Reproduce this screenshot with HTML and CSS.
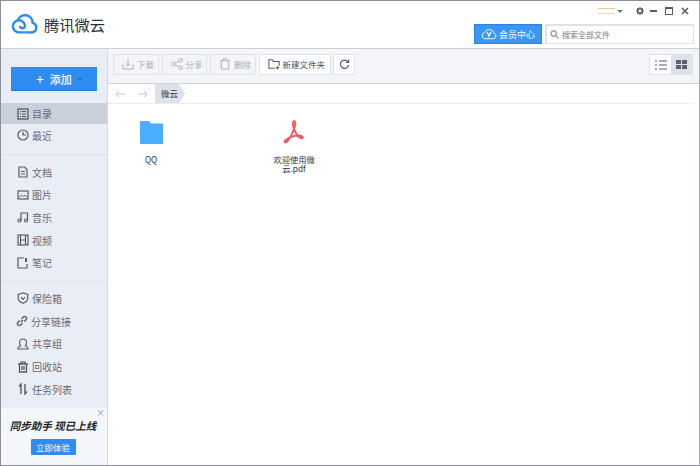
FILE: index.html
```html
<!DOCTYPE html>
<html lang="zh-CN">
    <head>
        <meta charset="UTF-8">
        <title>腾讯微云</title>
        <link rel="stylesheet" href="styles.css">
    </head>
    <body>
        <div id="app">
            <div id="header">
                <div class="logo">
                    <svg width="26" height="21" viewBox="0 0 32 26" fill="none" stroke="#2f8df2" stroke-width="3" stroke-linecap="round">
                        <path d="M24 24H8.500A7.500 7.500 0 1 1 16 16.500 3.200 3.200 0 0 1 10 17"/>
                        <path d="M7 9.200A9.500 9.500 0 0 1 25.500 12.200 6 6 0 0 1 24 24"/>
                    </svg>
                    <span>腾讯微云</span>
                </div>
                <div class="head-right">
                    <div class="win-bar">
                        <div class="user-line"></div>
                        <div class="caret"></div>
                        <svg class="gear" width="8" height="8" viewBox="0 0 10 10"><circle cx="5" cy="5" r="2.800" fill="none" stroke="#555b66" stroke-width="2"/><path d="M5 0v2M5 8v2M0 5h2M8 5h2M1.500 1.500l1.300 1.300M7.200 7.200l1.300 1.300M1.500 8.500l1.300-1.300M7.200 2.800l1.300-1.300" stroke="#555b66" stroke-width="1.500"/></svg>
                        <div class="win-min"></div>
                        <div class="win-max"></div>
                        <svg width="8" height="8" viewBox="0 0 8 8"><path d="M1 1l6 6M7 1l-6 6" stroke="#555b66" stroke-width="1.500"/></svg>
                    </div>
                    <div class="head-tools">
                        <div class="vip">
                            <svg width="16" height="12" viewBox="0 0 17 12" fill="none" stroke="#fff" stroke-width="1"><path d="M4 11h9a3 3 0 0 0 .6-5.900A5 5 0 0 0 4 4.500 3.300 3.300 0 0 0 4 11z"/><path d="M6.500 4l2 4.500L10.500 4" stroke-width="1.300"/></svg>
                            <span>会员中心</span>
                        </div>
                        <div class="search">
                            <svg width="9" height="9" viewBox="0 0 10 10" fill="none" stroke="#8d9299" stroke-width="1.300"><circle cx="4" cy="4" r="3"/><path d="M6.300 6.300L9.500 9.500"/></svg>
                            <span>搜索全部文件</span>
                        </div>
                    </div>
                </div>
            </div>
            <div id="main">
                <div id="side">
                    <div class="add-wrap">
                        <div class="add-btn"><b>+</b><span>添加</span><i></i></div>
                    </div>
                    <div class="nav-group first">
                        <div class="nav-item on">
                            <svg viewBox="0 0 12 12" fill="none" stroke="#555b66"><rect x="1" y="1" width="10" height="10" stroke-width="1.300"/><path d="M3 3.500h1M3 6h1M3 8.500h1M5 3.500h4M5 6h4M5 8.500h4"/></svg>
                            <span>目录</span>
                        </div>
                        <div class="nav-item">
                            <svg viewBox="0 0 12 12" fill="none" stroke="#555b66"><circle cx="6" cy="6" r="5" stroke-width="1.200"/><path d="M6 2.800V6h3" stroke-width="1.200"/></svg>
                            <span>最近</span>
                        </div>
                    </div>
                    <div class="nav-group">
                        <div class="nav-item">
                            <svg viewBox="0 0 12 12" fill="none" stroke="#555b66" stroke-width="1.200"><path d="M2 1h5.500L10 3.500V11H2z"/><path d="M4 5.500h4M4 8h4"/></svg>
                            <span>文档</span>
                        </div>
                        <div class="nav-item">
                            <svg viewBox="0 0 12 12" fill="none" stroke="#555b66" stroke-width="1.200"><rect x="1" y="2" width="10" height="8"/><path d="M2 8.500l2.500-2.500 2 1.500L8 6l2 2" stroke-width=".9"/></svg>
                            <span>图片</span>
                        </div>
                        <div class="nav-item">
                            <svg viewBox="0 0 12 12" fill="none" stroke="#555b66" stroke-width="1.200"><path d="M4 9.500V2h6.500v7"/><circle cx="2.500" cy="9.500" r="1.500"/><circle cx="9" cy="9.500" r="1.500"/></svg>
                            <span>音乐</span>
                        </div>
                        <div class="nav-item">
                            <svg viewBox="0 0 12 12" fill="none" stroke="#555b66" stroke-width="1.200"><rect x="1" y="1" width="10" height="10"/><path d="M3.500 1v10M8.500 1v10M3.500 6h5"/></svg>
                            <span>视频</span>
                        </div>
                        <div class="nav-item">
                            <svg viewBox="0 0 12 12" fill="none" stroke="#555b66" stroke-width="1.200"><path d="M7 1H1v10h9V7"/><path d="M9 1v4" stroke-width="2"/></svg>
                            <span>笔记</span>
                        </div>
                    </div>
                    <div class="nav-group last">
                        <div class="nav-item">
                            <svg viewBox="0 0 12 12" fill="none" stroke="#555b66" stroke-width="1.200"><path d="M6 .8l4.800 1.700V6c0 2.500-2 4.300-4.800 5.300C3.200 10.300 1.200 8.500 1.200 6V2.500z"/><path d="M4 5l2 2.500L8 5"/></svg>
                            <span>保险箱</span>
                        </div>
                        <div class="nav-item nudge">
                            <svg viewBox="0 0 12 12" fill="none" stroke="#555b66" stroke-width="1.300"><path d="M5 7l2-2M3.800 5.500L2 7.300a1.900 1.900 0 0 0 2.700 2.700l1.800-1.800M5.500 3.800L7.300 2A1.900 1.900 0 0 1 10 4.700L8.200 6.500"/></svg>
                            <span>分享链接</span>
                        </div>
                        <div class="nav-item">
                            <svg viewBox="0 0 12 12" fill="none" stroke="#555b66" stroke-width="1.100"><path d="M.8 11c0-2 1.700-2.500 3-3.200-1-1-1.300-2-1.300-3.300C2.500 2.500 4 1 6 1s3.500 1.500 3.500 3.500c0 1.300-.3 2.300-1.300 3.300 1.300.7 3 1.200 3 3.200z"/></svg>
                            <span>共享组</span>
                        </div>
                        <div class="nav-item">
                            <svg viewBox="0 0 12 12" fill="none" stroke="#555b66" stroke-width="1.300"><path d="M1 3h10M4 3V1.200h4V3M2.500 3v8h7V3M5 5v4M7 5v4"/></svg>
                            <span>回收站</span>
                        </div>
                        <div class="nav-item">
                            <svg viewBox="0 0 12 12" fill="none" stroke="#555b66" stroke-width="1.400"><path d="M4 11V1L2 3.500M8 1v10l2-2.500"/></svg>
                            <span>任务列表</span>
                        </div>
                    </div>
                    <div class="promo">
                        <div class="promo-close">×</div>
                        <div class="promo-title">同步助手 现已上线</div>
                        <div class="promo-btn">立即体验</div>
                    </div>
                </div>
                <div id="content">
                    <div class="toolbar">
                        <div class="tool dim w-small">
                            <svg width="12" height="12" viewBox="0 0 13 13" fill="none" stroke="#a9aeb6"><path d="M1 7v5h11V7M6.500 1v7.500M4 6.500l2.500 2.500L9 6.500"/></svg>
                            <span>下载</span>
                        </div>
                        <div class="tool dim w-small">
                            <svg width="12" height="12" viewBox="0 0 13 13" fill="none" stroke="#a9aeb6"><circle cx="2.500" cy="6.500" r="2"/><circle cx="10.500" cy="2.500" r="2"/><circle cx="10.500" cy="10.500" r="2"/><path d="M4.300 5.600l4.400-2.200M4.300 7.400l4.400 2.200"/></svg>
                            <span>分享</span>
                        </div>
                        <div class="tool dim w-small">
                            <svg width="12" height="12" viewBox="0 0 13 13" fill="none" stroke="#a9aeb6"><path d="M1 3h11M4.500 3V1h4v2M2.500 3v9h8V3"/></svg>
                            <span>删除</span>
                        </div>
                        <div class="tool w-new">
                            <svg width="12" height="12" viewBox="0 0 14 13" fill="none" stroke="#555b66" stroke-width="1.200"><path d="M8 11.500H1V1.500h4l1.500 2H13v5M11 9v4M9 11h4"/></svg>
                            <span>新建文件夹</span>
                        </div>
                        <div class="tool refresh">
                            <svg width="11" height="11" viewBox="0 0 12 12" fill="none" stroke="#555b66" stroke-width="1.300"><path d="M10 3.500A4.500 4.500 0 1 0 10.500 6.500M10.500 .8v3h-3"/></svg>
                        </div>
                        <div class="views">
                            <div class="view">
                                <svg width="12" height="10" viewBox="0 0 12 10" fill="none" stroke="#555b66" stroke-width="1.200"><path d="M0 1h2M4 1h8M0 5h2M4 5h8M0 9h2M4 9h8"/></svg>
                            </div>
                            <div class="view on">
                                <svg width="11" height="9" viewBox="0 0 11 9" fill="#5d636e"><rect width="5" height="4"/><rect x="6" width="5" height="4"/><rect y="5" width="5" height="4"/><rect x="6" y="5" width="5" height="4"/></svg>
                            </div>
                        </div>
                    </div>
                    <div class="crumbs">
                        <svg width="10" height="8" viewBox="0 0 10 8" fill="none" stroke="#c3c7ce"><path d="M10 4H1M4 1L1 4l3 3"/></svg>
                        <svg class="next" width="10" height="8" viewBox="0 0 10 8" fill="none" stroke="#c3c7ce"><path d="M0 4h9M6 1l3 3-3 3"/></svg>
                        <div class="crumb">微云</div>
                    </div>
                    <div class="files">
                        <div class="file">
                            <svg width="23" height="24" viewBox="0 0 23 24"><path d="M0 2a1 1 0 0 1 1-1h8l2 2.500h11a1 1 0 0 1 1 1V23a1 1 0 0 1-1 1H1a1 1 0 0 1-1-1z" fill="#4aaeff"/></svg>
                            <div class="file-name">QQ</div>
                        </div>
                        <div class="file">
                            <svg width="21" height="24" viewBox="0 0 21 24" fill="none" stroke="#ee5a5f" stroke-width="2"><path d="M10.500 10C9 6 8 1.500 10 1.300c2-.2 1.600 4-.5 8.700C8 14 5 20 2.500 22c-1.800 1.300-2.300-1-.8-2 3-2.200 9-4.800 14-4.500 3.500.2 4 3 1.500 2.600-3-.5-5-4-6.700-8z"/></svg>
                            <div class="file-name">欢迎使用微云.pdf</div>
                        </div>
                    </div>
                </div>
            </div>
        </div>
    </body>
</html>
```

FILE: styles.css
```css
* {
    box-sizing: border-box;
}
html, body {
    margin: 0;
    height: 100%;
}
body {
    font-family: "Noto Sans CJK SC", "Liberation Sans", sans-serif;
    font-size: 10px;
    color: #555b66;
    background: #fff;
}
#app {
    display: flex;
    flex-direction: column;
    width: 700px;
    height: 466px;
    border: 1px solid #8b8f98;
    border-right-color: #a4a8b0;
    overflow: hidden;
}
#header {
    display: flex;
    justify-content: space-between;
    height: 48px;
    flex-shrink: 0;
    border-bottom: 1px solid #ccd0d9;
}
.logo {
    display: flex;
    align-items: center;
    gap: 6px;
    height: 47px;
    padding: 0 0 0 11px;
    margin-top: -1px;
}
.logo span {
    font-size: 15.25px;
    color: #2b2f36;
}
.head-right {
    display: flex;
    flex-direction: column;
    align-items: flex-end;
}
.win-bar {
    display: flex;
    align-items: center;
    height: 19px;
    padding: 0 10px 0 0;
}
.user-line {
    width: 17px;
    height: 6px;
    border-top: 1px solid #f0c98e;
    border-bottom: 1px solid #e8dcc0;
}
.caret {
    margin: 1px 13px 0 2px;
    border: 3px solid transparent;
    border-top: 3px solid #6d727c;
    border-bottom: 0;
}
.gear {
    margin-right: 6px;
}
.win-min {
    width: 7px;
    height: 2px;
    margin: 1px 8px 0 0;
    background: #555b66;
}
.win-max {
    width: 8px;
    height: 8px;
    margin-right: 8px;
    border: 1px solid #555b66;
    border-top-width: 2px;
}
.head-tools {
    display: flex;
    gap: 3px;
    margin: 4px 0 0;
    padding-right: 5px;
}
.vip {
    display: flex;
    align-items: center;
    gap: 2px;
    width: 68px;
    height: 20px;
    padding-left: 6px;
    font-size: 9px;
    color: #fff;
    background: #3996f3;
    border: 1px solid #2d82dc;
}
.search {
    display: flex;
    align-items: center;
    gap: 3px;
    width: 149px;
    height: 20px;
    padding-left: 3px;
    font-size: 8px;
    color: #777c85;
    border: 1px solid #dfe2e8;
    border-width: 2px 1px 1px 2px;
}
#main {
    display: flex;
    flex: 1;
    min-height: 0;
}
#side {
    display: flex;
    flex-direction: column;
    width: 107px;
    flex-shrink: 0;
    background: #e9edf5;
    border-right: 1px solid #d4d8e1;
}
.add-wrap {
    padding: 18px 10px 12px;
}
.add-btn {
    display: flex;
    align-items: center;
    width: 86px;
    height: 24px;
    padding-left: 25px;
    color: #fff;
    font-size: 11px;
    font-weight: 500;
    background: #2f8df2;
    border-bottom: 1px solid #2479d4;
}
.add-btn b {
    margin-right: 6px;
    font-size: 14px;
    font-weight: 400;
    line-height: 1;
}
.add-btn i {
    margin: 1px 0 0 6px;
    border: 2.5px solid transparent;
    border-top: 3px solid #1f6fc6;
    border-bottom: 0;
}
.nav-group {
    padding: 6px 0 7px;
    border-bottom: 1px solid #dde1ea;
}
.nav-group.first {
    padding: 0 0 7px;
}
.nav-group.last {
    padding: 5px 0 0;
    border-bottom: 0;
}
.nav-item {
    display: flex;
    align-items: center;
    gap: 3px;
    height: 22.7px;
    padding-left: 16px;
    font-size: 10px;
    color: #666b75;
}
.nav-item.on {
    height: 21px;
    background: #c9d0db;
}
.nav-item.nudge {
    padding-left: 15px;
}
.nav-item svg {
    width: 12px;
    height: 12px;
    flex-shrink: 0;
}
.promo {
    position: relative;
    display: flex;
    flex-direction: column;
    align-items: center;
    flex: 1;
    margin-top: 7px;
    padding: 10px 2px 0 0;
    background: #f4f6fa;
}
.promo-close {
    position: absolute;
    top: 0;
    right: 2px;
    font-size: 9px;
    line-height: 10px;
    color: #8d9299;
}
.promo-title {
    font-size: 10.5px;
    font-style: italic;
    font-weight: 700;
    line-height: 15px;
    color: #1b1e24;
}
.promo-btn {
    width: 45px;
    height: 16px;
    margin-top: 6px;
    font-size: 8.5px;
    line-height: 16px;
    text-align: center;
    color: #fff;
    background: #2f8df2;
    border-radius: 1px;
}
#content {
    display: flex;
    flex-direction: column;
    flex: 1;
    min-width: 0;
}
.toolbar {
    display: flex;
    align-items: center;
    gap: 3px;
    height: 35px;
    padding: 0 6px 3px 5px;
    background: #f3f5f9;
    border-bottom: 1px solid #cfd3db;
}
.tool {
    display: flex;
    align-items: center;
    gap: 3px;
    height: 21px;
    padding: 0 0 1px 8px;
    font-size: 8.5px;
    color: #4b5059;
    background: #fff;
    border: 1px solid #dfe2e8;
}
.tool.dim {
    color: #a9aeb6;
    background: #f3f5f9;
}
.w-small {
    width: 45.5px;
}
.w-new {
    width: 72px;
}
.tool.refresh {
    width: 22px;
    margin-left: -1px;
    padding: 0 0 1px 5px;
}
.views {
    display: flex;
    margin-left: auto;
    height: 21px;
    border: 1px solid #dfe2e8;
}
.view {
    display: flex;
    align-items: center;
    justify-content: center;
    width: 21px;
    background: #fff;
}
.view.on {
    background: #dde1ea;
}
.crumbs {
    display: flex;
    align-items: center;
    height: 20px;
    margin-right: 5px;
    padding-left: 7px;
    border-bottom: 1px solid #eceef2;
}
.crumbs .next {
    margin-left: 13px;
}
.crumb {
    height: 19px;
    width: 30px;
    margin-left: 7px;
    padding-left: 6px;
    font-size: 8.5px;
    line-height: 18px;
    color: #33373e;
    background: #dde1ea;
    clip-path: polygon(0 0, 24px 0, 100% 50%, 24px 100%, 0 100%);
}
.files {
    display: flex;
    gap: 89px;
    padding: 16px 0 0 16px;
}
.file {
    display: flex;
    flex-direction: column;
    align-items: center;
    width: 54px;
}
.file svg {
    flex-shrink: 0;
}
.file-name {
    width: 45px;
    margin-top: 11px;
    font-size: 8.25px;
    line-height: 9px;
    text-align: center;
    word-break: break-all;
    color: #30343b;
}
```
